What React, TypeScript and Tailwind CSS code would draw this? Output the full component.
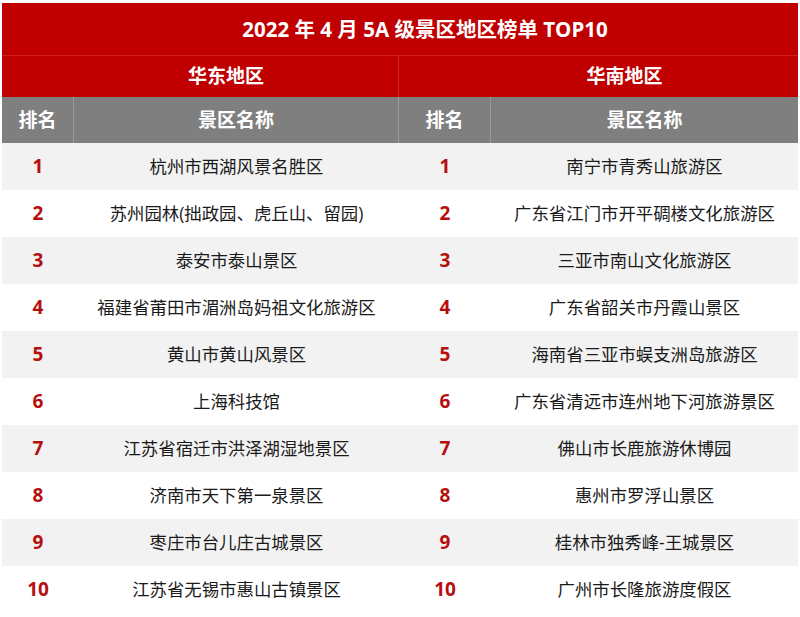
const east = [
  '杭州市西湖风景名胜区',
  '苏州园林(拙政园、虎丘山、留园)',
  '泰安市泰山景区',
  '福建省莆田市湄洲岛妈祖文化旅游区',
  '黄山市黄山风景区',
  '上海科技馆',
  '江苏省宿迁市洪泽湖湿地景区',
  '济南市天下第一泉景区',
  '枣庄市台儿庄古城景区',
  '江苏省无锡市惠山古镇景区',
]

const south = [
  '南宁市青秀山旅游区',
  '广东省江门市开平碉楼文化旅游区',
  '三亚市南山文化旅游区',
  '广东省韶关市丹霞山景区',
  '海南省三亚市蜈支洲岛旅游区',
  '广东省清远市连州地下河旅游景区',
  '佛山市长鹿旅游休博园',
  '惠州市罗浮山景区',
  '桂林市独秀峰-王城景区',
  '广州市长隆旅游度假区',
]

const font = { fontFamily: '"Open Sans", "Noto Sans CJK SC", sans-serif' }

export default function App() {
  return (
    <div className="w-[800px] h-[617px] bg-white pt-[3px] px-[2px]" style={font}>
      <div className="w-[796px]">
        <div className="h-[53px] bg-[#c00000] flex items-center justify-center pl-[50px] text-white font-bold text-[20.5px] border-b border-[#cf1f1f]">
          2022 年 4 月 5A 级景区地区榜单 TOP10
        </div>
        <div className="h-[41px] bg-[#c00000] grid grid-cols-[397px_399px] text-white font-bold text-[19px]">
          <div className="flex items-center justify-center pl-[52px] border-r border-[#cf2a2a]">华东地区</div>
          <div className="flex items-center justify-center pl-[52px]">华南地区</div>
        </div>
        <div className="h-[46px] bg-[#7f7f7f] grid grid-cols-[72px_325px_92px_307px] text-white font-bold text-[19px]">
          <div className="flex items-center justify-center border-r border-[#9a9a9a]">排名</div>
          <div className="flex items-center justify-center border-r border-[#9a9a9a]">景区名称</div>
          <div className="flex items-center justify-center border-r border-[#9a9a9a]">排名</div>
          <div className="flex items-center justify-center">景区名称</div>
        </div>
        {east.map((name, i) => (
          <div
            key={i}
            className={
              'h-[47px] grid grid-cols-[72px_325px_92px_307px] ' +
              (i % 2 === 0 ? 'bg-[#f2f2f2]' : 'bg-white')
            }
          >
            <div className="flex items-center justify-center text-[19px] font-bold text-[#b50f0f]">{i + 1}</div>
            <div className="flex items-center justify-center text-[17.4px] text-[#1a1a1a]">{name}</div>
            <div className="flex items-center justify-center text-[19px] font-bold text-[#b50f0f]">{i + 1}</div>
            <div className="flex items-center justify-center text-[17.4px] text-[#1a1a1a]">{south[i]}</div>
          </div>
        ))}
      </div>
    </div>
  )
}
